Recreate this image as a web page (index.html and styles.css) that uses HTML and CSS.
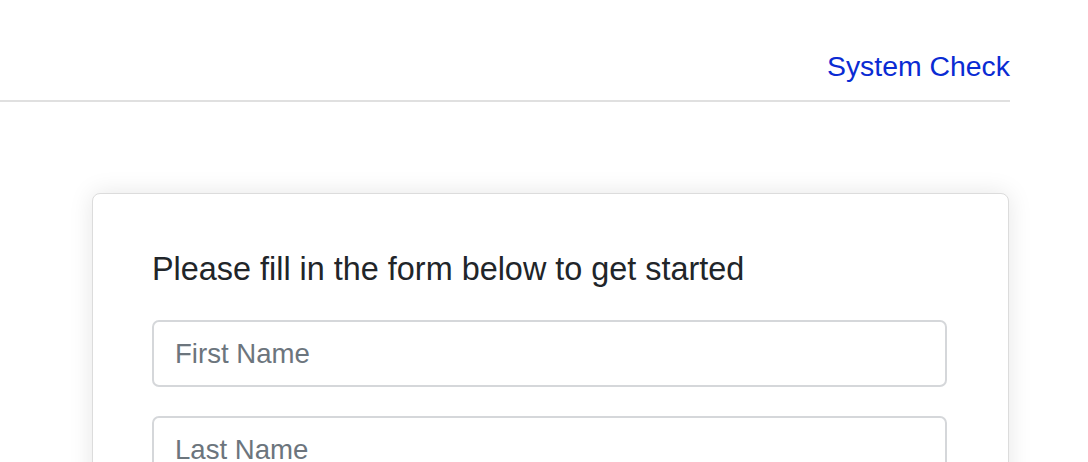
FILE: index.html
```html
<!DOCTYPE html>
<html lang="en">
<head>
<meta charset="utf-8">
<title>Get started</title>
<link rel="stylesheet" href="styles.css">
</head>
<body>
<header class="topbar">
  <a class="nav-link" href="#">System Check</a>
</header>
<main class="page">
  <section class="card">
    <h1 class="card-title">Please fill in the form below to get started</h1>
    <form class="form">
      <input class="field" type="text" placeholder="First Name">
      <input class="field" type="text" placeholder="Last Name">
    </form>
  </section>
</main>
</body>
</html>
```
FILE: styles.css
```css
* { box-sizing: border-box; }
html, body { margin: 0; padding: 0; background: #ffffff; }
body {
  font-family: "Liberation Sans", Arial, Helvetica, sans-serif;
  color: #212529;
  width: 1088px;
  height: 462px;
  overflow: hidden;
}
.topbar {
  display: flex;
  justify-content: flex-end;
  align-items: flex-end;
  height: 102px;
  margin-right: 78px;
  border-bottom: 2px solid #e0e0e0;
  padding-bottom: 18px;
}
.nav-link {
  font-size: 28.4px;
  line-height: 32px;
  color: #0a2bd3;
  text-decoration: none;
}
.page {
  padding: 91px 0 0 92px;
}
.card {
  width: 917px;
  min-height: 300px;
  background: #fff;
  border: 1px solid #dcdcdc;
  border-radius: 8px;
  box-shadow: 0 0 24px rgba(0, 0, 0, 0.1);
  padding: 56px 61px 0 59px;
}
.card-title {
  margin: 0 0 32px 0;
  font-size: 32.4px;
  line-height: 38px;
  font-weight: normal;
  color: #212529;
}
.form {
  display: flex;
  flex-direction: column;
  gap: 29px;
}
.field {
  display: block;
  width: 100%;
  height: 67px;
  border: 2px solid #d5d7da;
  border-radius: 7px;
  padding: 0 21px;
  font-family: inherit;
  font-size: 27.6px;
  color: #495057;
  background: #fff;
  outline: none;
}
.field::placeholder { color: #6c757d; opacity: 1; }
```
